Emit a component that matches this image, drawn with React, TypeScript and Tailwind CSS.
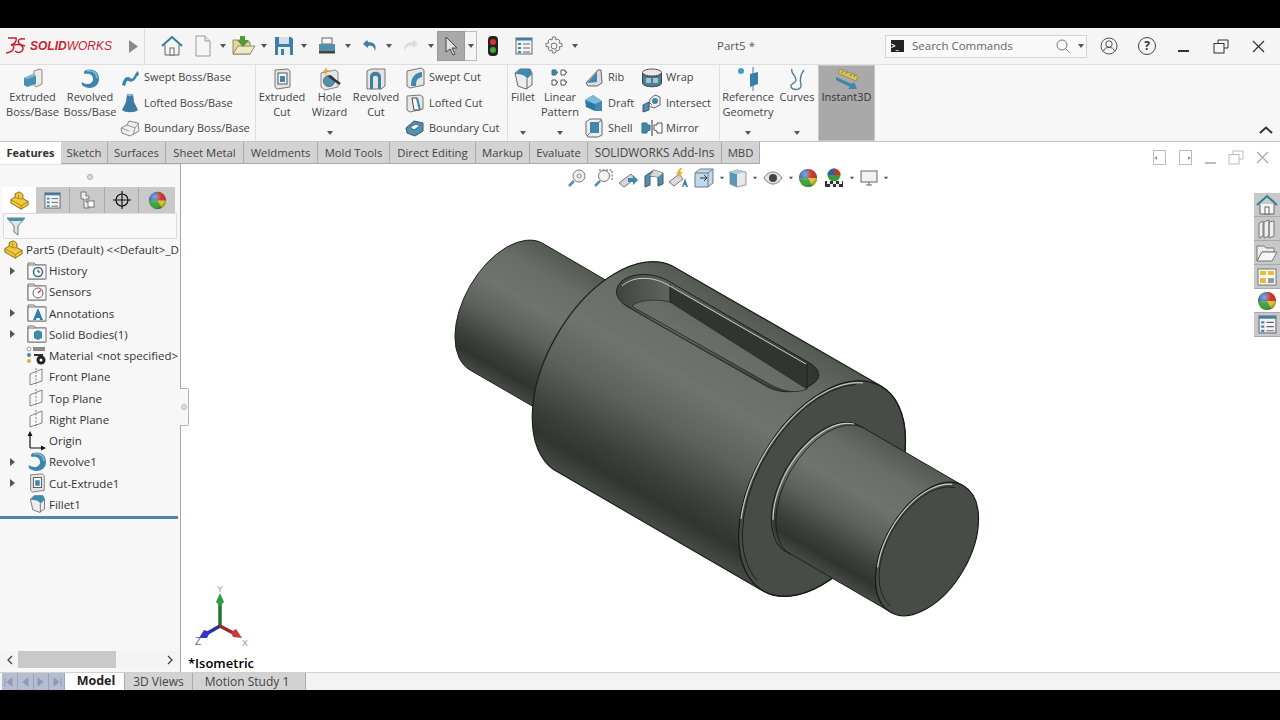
import type { ReactNode } from "react";

function I({ w = 24, h = 24, vb, children }: { w?: number; h?: number; vb?: string; children: ReactNode }) {
  return (
    <svg width={w} height={h} viewBox={vb ?? `0 0 ${w} ${h}`} className="block shrink-0">
      {children}
    </svg>
  );
}

function Caret({ className = "" }: { className?: string }) {
  return (
    <svg width="6" height="4" viewBox="0 0 6 4" className={`block shrink-0 ${className}`}>
      <path d="M0 0h6L3 4z" fill="#555" />
    </svg>
  );
}

/* feature icons */
const ExtrudedBoss = () => (
  <I>
    <path d="M13 4l6-2 2 1v14l-6 3-2-2z" fill="#ececec" stroke="#8a8a8a" />
    <path d="M3 11l9-4 3 2v8l-9 3-3-2z" fill="#4a8fb2" />
    <path d="M3 11l9-4 3 2-9 3z" fill="#7fb8d0" />
  </I>
);
const RevolvedBoss = () => (
  <I>
    <path d="M8 3c8-2 13 2 13 9 0 7-7 11-14 8-3-1-4-3-3-5 3 3 11 3 11-3 0-5-5-6-8-5-2-1-1-3 1-4z" fill="#3d87ad" />
    <path d="M9 4c6-1 10 2 10 7" stroke="#7cbbd6" strokeWidth="1.6" fill="none" />
  </I>
);
const Swept = () => (
  <I w={20} h={20}>
    <path d="M2 17c1-5 3-8 6-8 3 0 2 3 5 1 2-2 2-5 5-7l1 4c-3 1-3 5-6 6-4 2-4-1-6 0-1 1-1 3-2 5z" fill="#3a84ab" />
  </I>
);
const Lofted = () => (
  <I w={20} h={22}>
    <path d="M7 2h6l1 8 4 8c-3 3-13 3-16 0l4-8z" fill="#3c7ca3" />
    <ellipse cx="10" cy="3" rx="3" ry="1.2" fill="#86b7d0" />
  </I>
);
const BoundaryBoss = () => (
  <I w={20} h={18}>
    <path d="M1 9l6-3 2-4 9 2 1 8-9 5-8-3z" fill="#f0f0f0" stroke="#888" />
    <path d="M7 6l8 3 4-5M15 9l-2 7M1 9l8 3" stroke="#999" fill="none" />
  </I>
);
const ExtrudedCut = () => (
  <I w={20} h={22}>
    <path d="M3 2l13-1 2 2v16l-13 2-2-2z" fill="#e6e6e6" stroke="#777" />
    <rect x="6" y="5" width="9" height="11" fill="#f7f7f7" stroke="#555" />
    <path d="M8 8h5v6H8z" fill="#3f87ab" />
  </I>
);
const HoleWizard = () => (
  <I w={24} h={26}>
    <path d="M3 7l14-3 3 2v15l-13 3-4-3z" fill="#e6e6e6" stroke="#888" />
    <circle cx="11" cy="15" r="5.5" fill="#4d93b5" stroke="#666" />
    <path d="M11 10l11 8" stroke="#333" strokeWidth="2.5" />
    <path d="M8 1l1 3 3 1-3 1-1 3-1-3-3-1 3-1z" fill="#e3a326" />
  </I>
);
const RevolvedCut = () => (
  <I w={22} h={22}>
    <path d="M2 3l4-2h14v17l-4 3H2z" fill="#e4e4e4" stroke="#777" />
    <path d="M5 21V9c0-7 11-7 11 0v12h-3V10c0-3-5-3-5 0v11z" fill="#3f7f9f" />
  </I>
);
const SweptCut = () => (
  <I w={20} h={22}>
    <path d="M2 4l14-3 3 2v15l-14 3-3-2z" fill="#e6e6e6" stroke="#777" />
    <path d="M6 19c0-8 3-13 11-14v5c-5 1-6 4-6 9z" fill="#3f87ab" />
  </I>
);
const LoftedCut = () => (
  <I w={20} h={20}>
    <path d="M2 3l13-1 3 2v12l-13 3-3-2z" fill="#e6e6e6" stroke="#777" />
    <path d="M7 5h5l3 12H9z" fill="#f8f8f8" stroke="#444" />
    <path d="M12 5l3 12" stroke="#3f87ab" strokeWidth="2" />
  </I>
);
const BoundaryCut = () => (
  <I w={20} h={18}>
    <path d="M1 9l8-7 9 2v8l-8 5-8-3z" fill="#4d93b5" stroke="#456" />
    <path d="M5 8l6-3 4 2-6 4z" fill="#eef4f7" stroke="#345" strokeWidth=".7" />
  </I>
);
const Fillet = () => (
  <I w={22} h={24}>
    <path d="M3 6l5-4h10l2 4v12l-6 4-8-3z" fill="#ededed" stroke="#666" />
    <path d="M3 7c5 0 11 1 12 5l5-5-2-5H8z" fill="#3f8ab0" />
    <path d="M15 12v10" stroke="#666" />
  </I>
);
const LinearPattern = () => (
  <I w={20} h={22}>
    <path d="M2 2h4v2h2l-2 2v1H2z" fill="#3f87ab" stroke="#3f6f88" />
    <path d="M11 2h4v2h2l-2 2v1h-4z" fill="#fff" stroke="#555" />
    <path d="M2 12h4v2h2l-2 2v1H2z" fill="#fff" stroke="#555" />
    <path d="M11 12h4v2h2l-2 2v1h-4z" fill="#fff" stroke="#555" />
  </I>
);
const Rib = () => (
  <I w={20} h={20}>
    <path d="M2 15L14 2h3l1 13-5 3H4z" fill="#dcdcdc" stroke="#666" />
    <path d="M3 15L13 4v10z" fill="#3f87ab" />
  </I>
);
const Draft = () => (
  <I w={20} h={20}>
    <path d="M1 7l8-5 9 6v10h-7V11z" fill="#3f8ab0" />
    <path d="M1 7l8-5 9 6-7 3z" fill="#7cbcd8" />
    <path d="M1 7l10 4v7L2 14z" fill="#2d79a3" />
  </I>
);
const Shell = () => (
  <I w={20} h={20}>
    <path d="M2 4l4-3h11l1 3v13l-4 2H4l-2-3z" fill="#eee" stroke="#666" />
    <path d="M6 4h9v11H6z" fill="#3f87ab" />
    <path d="M6 15l-3 3M15 4l3-2" stroke="#666" />
  </I>
);
const Wrap = () => (
  <I w={22} h={20}>
    <ellipse cx="11" cy="4.5" rx="9.5" ry="3.5" fill="#e8e8e8" stroke="#555" />
    <path d="M1.5 5v10c0 5 19 5 19 0V5c0 5-19 5-19 0z" fill="#4d7d95" stroke="#444" />
    <path d="M5 10h5v5H5zM12 10h5v5h-5z" fill="#9cc6d9" />
  </I>
);
const Intersect = () => (
  <I w={20} h={20}>
    <path d="M1 12l6-3v8l-6 2z" fill="#4a8fb2" stroke="#456" />
    <path d="M8 6l5-4 5 2v8l-6 3-5-2z" fill="#f2f2f2" stroke="#666" />
    <circle cx="13" cy="8" r="3" fill="#3f87ab" />
    <path d="M7 9l3 3" stroke="#666" />
  </I>
);
const Mirror = () => (
  <I w={22} h={16}>
    <path d="M1 3h5v2h3v5l-3 1v2H1z" fill="#3f87ab" stroke="#3b6f8b" />
    <path d="M11 0v16" stroke="#333" />
    <path d="M21 3h-5v2h-3v5l3 1v2h5z" fill="#fff" stroke="#555" />
  </I>
);
const RefGeometry = () => (
  <I w={24} h={24}>
    <circle cx="5" cy="4" r="3" fill="#3f9fc6" />
    <path d="M14 7l8-2v12l-8 3z" fill="#2f80aa" />
    <path d="M17 0v24" stroke="#4a7f9b" strokeWidth="1" />
  </I>
);
const Curves = () => (
  <I w={22} h={24}>
    <path d="M6 2c-2 4 4 6 4 11 0 4-6 3-5 7 2 4 11 3 10-2-1-4-1-10 3-15" fill="none" stroke="#4f8099" strokeWidth="1.4" />
  </I>
);
const Instant3D = () => (
  <I w={24} h={22}>
    <path d="M5 1l18 7-2 5L3 5z" fill="#d9c554" stroke="#857c33" strokeWidth=".6" />
    <path d="M8 3l-1 2M12 4l-1 2M16 6l-1 2M20 7l-1 2" stroke="#555" strokeWidth=".8" />
    <path d="M1 9l16 7 2-2 3 7-9 0 2-2L1 12z" fill="#3f87ab" />
  </I>
);

/* top bar icons */
const Home = () => (
  <I w={22} h={22}>
    <path d="M1 11L11 2l10 9" fill="none" stroke="#2f7f95" strokeWidth="2" />
    <path d="M4 10v10h14V10" fill="#f5f5f5" stroke="#666" />
    <rect x="9" y="13" width="4" height="7" fill="#fff" stroke="#666" />
  </I>
);
const FileIcon = () => (
  <I w={18} h={22}>
    <path d="M2 1h9l5 5v15H2z" fill="#f6f6f6" stroke="#999" />
    <path d="M11 1v5h5" fill="#e5e5e5" stroke="#999" />
  </I>
);
const OpenIcon = () => (
  <I w={24} h={22}>
    <path d="M1 5h7l2 2h8v12H1z" fill="#e6d49a" stroke="#8f8a68" />
    <path d="M1 19l5-8h17l-5 8z" fill="#f2e8c4" stroke="#8f8a68" />
    <path d="M8 1h5v4h4l-6 7-6-7h3z" fill="#4e9b2f" />
  </I>
);
const Save = () => (
  <I w={20} h={20}>
    <path d="M1 1h16l2 2v16H1z" fill="#3f7fa3" />
    <rect x="5" y="1" width="10" height="7" fill="#cfe0ea" />
    <rect x="4" y="11" width="12" height="8" fill="#e9eef1" />
    <rect x="7" y="13" width="3" height="6" fill="#3f7fa3" />
  </I>
);
const Print = () => (
  <I w={18} h={18}>
    <rect x="4" y="1" width="10" height="6" fill="#f8f8f8" stroke="#666" />
    <path d="M1 7h16v7H1z" fill="#4f8fb0" />
    <rect x="1" y="14" width="16" height="2.5" fill="#444" />
  </I>
);
const Undo = ({ dim = false }: { dim?: boolean }) => (
  <I w={16} h={14}>
    <path
      d={dim ? "M11 1l4 4-5 4V7c-4-1-7 0-8 5-2-6 2-9 8-9z" : "M5 1L1 5l5 4V7c4-1 6 0 7 5 2-6-1-9-7-9z"}
      fill={dim ? "#dcdcdc" : "#3f7fa3"}
    />
  </I>
);
const Cursor = () => (
  <I w={14} h={20}>
    <path d="M2 1v15l4-3 3 6 2-1-3-6h5z" fill="#e0e0e0" stroke="#444" />
  </I>
);
const Traffic = () => (
  <I w={10} h={20}>
    <rect x="0" y="0" width="10" height="20" rx="4" fill="#222" />
    <circle cx="5" cy="6" r="3" fill="#d8322b" />
    <circle cx="5" cy="14" r="3" fill="#46a53a" />
  </I>
);
const ListIcon = ({ s = 18 }: { s?: number }) => (
  <I w={s} h={s} vb="0 0 18 18">
    <rect x="1" y="1" width="16" height="16" fill="#f4f4f4" stroke="#667" />
    <rect x="1" y="1" width="16" height="2.5" fill="#3f7fa3" />
    <path d="M3 6h3v2H3zM3 10h3v2H3zM3 14h3v2H3z" fill="#3f87ab" />
    <path d="M8 7h7M8 11h7M8 15h7" stroke="#666" />
  </I>
);
const Gear = () => (
  <I w={20} h={20}>
    <circle cx="10" cy="10" r="3" fill="none" stroke="#777" />
    <path
      d="M8.5 1h3l.5 3 2-1 2 2-1 2 3 .5v3l-3 .5 1 2-2 2-2-1-.5 3h-3l-.5-3-2 1-2-2 1-2-3-.5v-3l3-.5-1-2 2-2 2 1z"
      fill="none"
      stroke="#777"
    />
  </I>
);
const UserIcon = () => (
  <I w={18} h={18}>
    <circle cx="9" cy="9" r="8" fill="none" stroke="#555" />
    <circle cx="9" cy="7" r="3.2" fill="none" stroke="#555" />
    <path d="M3.5 14c1-3 3-3.500 5.500-3.500s4.500.5 5.500 3.500" fill="none" stroke="#555" />
  </I>
);
const Restore = ({ c = "#333" }: { c?: string }) => (
  <I w={16} h={15}>
    <path d="M5 4V1h10v8h-4" fill="none" stroke={c} />
    <rect x="1" y="4.500" width="10" height="9.500" fill="none" stroke={c} />
  </I>
);
const CloseX = ({ c = "#333", s = 13 }: { c?: string; s?: number }) => (
  <I w={s} h={s}>
    <path d={`M1 1L${s - 1} ${s - 1}M${s - 1} 1L1 ${s - 1}`} stroke={c} strokeWidth="1.2" />
  </I>
);

/* task pane + shared */
const Sphere = ({ s = 22 }: { s?: number }) => (
  <I w={s} h={s} vb="0 0 22 22">
    <defs>
      <radialGradient id="gloss" cx="0.35" cy="0.3" r="0.7">
        <stop offset="0" stopColor="#fff" stopOpacity=".45" />
        <stop offset="0.6" stopColor="#fff" stopOpacity="0" />
        <stop offset="1" stopColor="#000" stopOpacity=".25" />
      </radialGradient>
    </defs>
    <circle cx="11" cy="11" r="10" fill="#3f9f3a" />
    <path d="M11 11H1A10 10 0 0 1 11 1z" fill="#2f5fb5" />
    <path d="M11 11V1a10 10 0 0 1 10 10z" fill="#c6302a" />
    <path d="M11 11h10a10 10 0 0 1-5 8.700z" fill="#e0c52e" />
    <circle cx="11" cy="11" r="10" fill="url(#gloss)" />
  </I>
);
const PartIcon = ({ s = 22 }: { s?: number }) => (
  <I w={s} h={s} vb="0 0 22 22">
    <path d="M1 10l5-3V3l5-2 4 3v5l6 3v4l-8 5-12-7z" fill="#f3c93c" stroke="#7a5e10" />
    <path d="M1 10l12 7v4M13 17l8-5M6 7l4 2 5 0M10 9V4" fill="none" stroke="#a67f16" />
  </I>
);

/* tree icons */
const Folder = ({ children }: { children: ReactNode }) => (
  <I w={20} h={20}>
    <path d="M1 18V2h6l2 2h9v14z" fill="#f4f4f4" stroke="#777" />
    <rect x="1" y="4" width="18" height="14" fill="#f8f8f8" stroke="#777" />
    {children}
  </I>
);
const PlaneIcon = () => (
  <I w={20} h={20}>
    <path d="M3 7l12-5v12L3 18z" fill="none" stroke="#777" strokeWidth=".9" />
    <path d="M9 1v18" stroke="#777" strokeWidth=".9" strokeDasharray="2 1.500" />
  </I>
);
const Origin = () => (
  <I w={20} h={20}>
    <path d="M3 17V4M3 17h14" stroke="#111" strokeWidth="1.200" />
    <path d="M3 0l2.500 5h-5zM19 17l-5-2.500v5z" fill="#111" />
  </I>
);
const Material = () => (
  <I w={22} h={20}>
    <circle cx="3" cy="3" r="2" fill="#fff" stroke="#999" />
    <circle cx="3" cy="9" r="2" fill="#3f87ab" />
    <circle cx="3" cy="15" r="2" fill="#d8b32a" />
    <path d="M7 2h12M7 4h12" stroke="#222" strokeWidth="1.200" />
    <path d="M8 8h9v2H8z" fill="#333" />
    <circle cx="15" cy="14" r="4.500" fill="#222" />
    <circle cx="15" cy="14" r="1.500" fill="#fff" />
  </I>
);

const PLANES = ["Front Plane", "Top Plane", "Right Plane"];

function TreeRow({ arrow, icon, label }: { arrow?: boolean; icon: ReactNode; label: string }) {
  return (
    <div className="flex h-[21.25px] items-center whitespace-nowrap">
      <div className="flex w-[24px] justify-center">
        {arrow && (
          <svg width="5" height="8" viewBox="0 0 5 8" className="block">
            <path d="M0 0l5 4-5 4z" fill="#555" />
          </svg>
        )}
      </div>
      <div className="flex w-[25px] shrink-0 items-center justify-center">{icon}</div>
      <span className="text-[#333]">{label}</span>
    </div>
  );
}

function BigBtn({ w, lines, icon, caret }: { w: string; lines: string[]; icon: ReactNode; caret?: boolean }) {
  return (
    <div className={`flex h-full shrink-0 flex-col items-center pt-[4px] ${w}`}>
      <div className="flex h-[20px] items-center justify-center">{icon}</div>
      <div className="text-center leading-[15px]">
        {lines.map((l) => (
          <div key={l} className="whitespace-nowrap">
            {l}
          </div>
        ))}
      </div>
      {caret && <Caret className="mt-auto mb-[6px]" />}
    </div>
  );
}

function ListCol({ w, items }: { w: string; items: { label: string; icon: ReactNode }[] }) {
  return (
    <div className={`flex shrink-0 flex-col ${w}`}>
      {items.map((it) => (
        <div key={it.label} className="flex h-[25.300px] items-center whitespace-nowrap">
          <div className="flex w-[24px] shrink-0 justify-center">{it.icon}</div>
          <span className="ml-[2px]">{it.label}</span>
        </div>
      ))}
    </div>
  );
}

const TABS = [
  { label: "Sketch", w: "w-[47px]" },
  { label: "Surfaces", w: "w-[58px]" },
  { label: "Sheet Metal", w: "w-[78px]" },
  { label: "Weldments", w: "w-[74px]" },
  { label: "Mold Tools", w: "w-[72px]" },
  { label: "Direct Editing", w: "w-[86px]" },
  { label: "Markup", w: "w-[54px]" },
  { label: "Evaluate", w: "w-[58px]" },
  { label: "SOLIDWORKS Add-Ins", w: "w-[134px] text-[11.800px]" },
  { label: "MBD", w: "w-[38px]" },
];

const STOPS: [number, string][] = [
  [0, "#535a52"],
  [0.18, "#686e67"],
  [0.4, "#6f756e"],
  [0.6, "#5c625b"],
  [0.8, "#3b403a"],
  [0.9, "#30352f"],
  [1, "#464b45"],
];

function Cyl({ id, v }: { id: string; v: number[] }) {
  return (
    <linearGradient id={id} gradientUnits="userSpaceOnUse" x1={v[0]} y1={v[1]} x2={v[2]} y2={v[3]}>
      {STOPS.map(([o, c]) => (
        <stop key={o} offset={o} stopColor={c} />
      ))}
    </linearGradient>
  );
}

function Shaft() {
  return (
    <svg width="1099" height="508" viewBox="181 164 1099 508" className="absolute top-0 left-0 block">
      <defs>
        <Cyl id="cl" v={[543, 243.5, 470, 370]} />
        <Cyl id="cb" v={[671.5, 265.5, 553.5, 469.5]} />
        <Cyl id="cr" v={[858.5, 425, 785.5, 551]} />
        <linearGradient id="sl" x1="0" y1="0" x2="1" y2="0">
          <stop offset="0" stopColor="#3e443e" />
          <stop offset="0.25" stopColor="#5f655e" />
          <stop offset="1" stopColor="#2f352f" />
        </linearGradient>
      </defs>
      {/* left stub */}
      <path d="M543 243.500A73 42 -60 0 0 470 370L560 422L633 296Z" fill="url(#cl)" stroke="#1c1f1c" strokeWidth="1" />
      {/* main body */}
      <path d="M671.500 265.500A118 68 -60 0 0 553.500 469.500L763 591A118 68 -60 0 0 881 386Z" fill="url(#cb)" stroke="#1c1f1c" strokeWidth="1.200" />
      {/* keyway */}
      <path
        d="M670 282L806 361C818 367 822 375 816 381C806 391 786 396 768 387L628 307C616 300 613 290 621 282C630 273 652 271 670 282Z"
        fill="url(#sl)"
        stroke="#1c1f1c"
      />
      <path d="M670 286L807 366V389L670 302Z" fill="#30362f" />
      <path d="M670 284V302M807 364V389" stroke="#1c1f1c" />
      <path d="M670 302L807 389C798 393 786 393 771 385L633 307C631 303 650 297 670 302Z" fill="url(#cb)" stroke="#262a26" strokeWidth=".8" />
      <path d="M622 286C631 277 651 275 668 285L806 364" fill="none" stroke="#c9cdc8" strokeWidth="1" />
      {/* flange face */}
      <ellipse cx="822" cy="488.500" rx="118" ry="68" transform="rotate(-60 822 488.500)" fill="#474d46" stroke="#161916" strokeWidth="1.200" />
      <path d="M863 382.800A116 67 -60 0 0 741 518.800" fill="none" stroke="#c2c6c1" strokeWidth="1.300" />
      <path d="M856 384.400A114 65.800 -60 0 0 757 580" fill="none" stroke="#161916" strokeWidth=".9" />
      {/* right stub */}
      <path d="M858.500 425A73 42 -60 0 0 785.500 551L890.500 612L963.500 486Z" fill="url(#cr)" />
      <path d="M858.500 425L963.500 486M785.500 551L890.500 612" stroke="#1c1f1c" />
      <path d="M858.500 425.300A73 42 -60 0 0 785.500 551.700" fill="none" stroke="#161916" strokeWidth="1" />
      <path d="M851.600 422.600A73 42 -60 0 0 770.500 518.300" fill="none" stroke="#c9cdc8" strokeWidth="1.200" transform="translate(2.500 1.500)" />
      <path d="M858.500 425.300A73 42 -60 0 0 785.500 551.700" fill="none" stroke="#161916" strokeWidth=".8" transform="translate(4.500 2.600)" />
      {/* end face */}
      <ellipse cx="927" cy="549" rx="73" ry="42" transform="rotate(-60 927 549)" fill="#474d46" stroke="#161916" strokeWidth="1.200" />
      <path d="M952.100 484.300A71 41 -60 0 0 877.500 567.400" fill="none" stroke="#c9cdc8" strokeWidth="1.200" />
      <path d="M954.600 487.600A68 39.300 -60 0 0 890.200 605.900" fill="none" stroke="#161916" strokeWidth=".8" />
    </svg>
  );
}

function Triad() {
  return (
    <svg width="60" height="62" viewBox="0 0 60 62" className="absolute top-[421px] left-[11px] block">
      <path d="M28 42L28 18" stroke="#1e7a2f" strokeWidth="3.500" />
      <path d="M28 8l4 9-4 4-4-4z" fill="#2f9c40" />
      <path d="M28 41L14 49" stroke="#2b2f9c" strokeWidth="3.500" />
      <path d="M7 53l5-8 6 2-3 6z" fill="#3438c8" />
      <path d="M28 41L43 49" stroke="#9a2a2a" strokeWidth="3.500" />
      <path d="M50 53l-9-1-2-5 5-3z" fill="#c73a3a" />
      <text x="25" y="7" fontSize="9" fill="#88a88c" fontFamily="Liberation Sans, sans-serif">Y</text>
      <text x="3" y="60" fontSize="10" fill="#5a5f9a" fontFamily="Liberation Sans, sans-serif">Z</text>
      <text x="50" y="61" fontSize="9" fill="#b28a8a" fontFamily="Liberation Sans, sans-serif">X</text>
    </svg>
  );
}

export default function App() {
  return (
    <div className="flex h-[720px] w-[1280px] flex-col overflow-hidden bg-black font-['Open_Sans',sans-serif] text-[11.5px] text-[#444]">
      <div className="h-[28px] shrink-0 bg-black" />

      {/* title bar */}
      <div className="flex h-[36px] shrink-0 items-center bg-[#f5f5f5]">
        <div className="flex h-full w-[145px] shrink-0 items-center border-r border-[#dcdcdc] pl-[5px]">
          <svg width="22" height="20" viewBox="0 0 22 20" className="block shrink-0">
            <path d="M3 2h8c1 3-1 6-5 7 3 0 4 3 1 6-2 1-4 2-6 2M9 9c4-1 8 0 11 1M20 3c-5-1-8 1-6 4s6 4 3 8c-2 2-5 2-7 0" fill="none" stroke="#c8202f" strokeWidth="1.500" />
          </svg>
          <span className="ml-[3px] font-['Liberation_Sans',sans-serif] text-[12px] text-[#c8202f] italic">
            <b>SOLID</b>WORKS
          </span>
          <svg width="9" height="13" viewBox="0 0 9 13" className="ml-[17px] block shrink-0">
            <path d="M0 0l9 6.500L0 13z" fill="#8a8a8a" />
          </svg>
        </div>
        <div className="ml-[16px]"><Home /></div>
        <div className="ml-[11px]"><FileIcon /></div>
        <Caret className="ml-[8px]" />
        <div className="ml-[6px]"><OpenIcon /></div>
        <Caret className="ml-[5px]" />
        <div className="ml-[7px]"><Save /></div>
        <Caret className="ml-[7px]" />
        <div className="ml-[11px]"><Print /></div>
        <Caret className="ml-[9px]" />
        <div className="ml-[11px]"><Undo /></div>
        <Caret className="ml-[8px]" />
        <div className="ml-[11px]"><Undo dim /></div>
        <Caret className="ml-[9px]" />
        <div className="ml-[3px] flex h-[30px] w-[28px] items-center justify-center border border-[#999] bg-[#a9a9a9]"><Cursor /></div>
        <div className="flex h-[30px] w-[12px] items-center justify-center border-y border-r border-[#bbb]"><Caret /></div>
        <div className="ml-[11px]"><Traffic /></div>
        <div className="ml-[17px]"><ListIcon /></div>
        <div className="ml-[11px]"><Gear /></div>
        <Caret className="ml-[8px]" />
        <span className="ml-[139px] whitespace-nowrap text-[#555]">Part5 *</span>
        <div className="ml-[130px] flex h-[23px] w-[202px] shrink-0 items-center border border-[#d4d4d4] bg-[#f9f9f9] pl-[5px]">
          <div className="h-[12px] w-[13px] bg-[#222] text-[8px] leading-[11px] font-bold text-white">&gt;_</div>
          <span className="ml-[8px] text-[#666]">Search Commands</span>
          <svg width="16" height="16" viewBox="0 0 16 16" className="ml-auto block">
            <circle cx="7" cy="7" r="5" fill="none" stroke="#777" />
            <path d="M10.500 10.500l4 4" stroke="#777" />
          </svg>
          <Caret className="mr-[2px] ml-[7px]" />
        </div>
        <div className="ml-[13px]"><UserIcon /></div>
        <div className="ml-[20px] flex h-[18px] w-[18px] items-center justify-center rounded-full border-[1.5px] border-[#444] text-[12px] font-bold text-[#333]">?</div>
        <div className="mt-[10px] ml-[22px] h-[1.500px] w-[11px] bg-[#333]" />
        <div className="ml-[24px]"><Restore /></div>
        <div className="ml-[23px]"><CloseX /></div>
      </div>

      {/* ribbon */}
      <div className="flex h-[78px] shrink-0 border-t border-b border-t-[#dfdfdf] border-b-[#c4c4c4] bg-[#f7f7f7] text-[11px]">
        <div className="flex w-[256px] shrink-0 border-r border-[#dedede] pl-[4px]">
          <BigBtn w="w-[57px]" lines={["Extruded", "Boss/Base"]} icon={<ExtrudedBoss />} />
          <BigBtn w="w-[57px] pl-[1px]" lines={["Revolved", "Boss/Base"]} icon={<RevolvedBoss />} />
          <ListCol
            w="w-[134px]"
            items={[
              { label: "Swept Boss/Base", icon: <Swept /> },
              { label: "Lofted Boss/Base", icon: <Lofted /> },
              { label: "Boundary Boss/Base", icon: <BoundaryBoss /> },
            ]}
          />
        </div>
        <div className="flex w-[252px] shrink-0 border-r border-[#dedede]">
          <BigBtn w="w-[50px] pl-[2px]" lines={["Extruded", "Cut"]} icon={<ExtrudedCut />} />
          <BigBtn w="w-[46px] pl-[1px]" lines={["Hole", "Wizard"]} icon={<HoleWizard />} caret />
          <BigBtn w="w-[48px]" lines={["Revolved", "Cut"]} icon={<RevolvedCut />} />
          <ListCol
            w="w-[104px] ml-[3px]"
            items={[
              { label: "Swept Cut", icon: <SweptCut /> },
              { label: "Lofted Cut", icon: <LoftedCut /> },
              { label: "Boundary Cut", icon: <BoundaryCut /> },
            ]}
          />
        </div>
        <div className="flex w-[212px] shrink-0 border-r border-[#dedede]">
          <BigBtn w="w-[30px]" lines={["Fillet"]} icon={<Fillet />} caret />
          <BigBtn w="w-[44px]" lines={["Linear", "Pattern"]} icon={<LinearPattern />} caret />
          <ListCol
            w="w-[58px]"
            items={[
              { label: "Rib", icon: <Rib /> },
              { label: "Draft", icon: <Draft /> },
              { label: "Shell", icon: <Shell /> },
            ]}
          />
          <ListCol
            w="w-[78px]"
            items={[
              { label: "Wrap", icon: <Wrap /> },
              { label: "Intersect", icon: <Intersect /> },
              { label: "Mirror", icon: <Mirror /> },
            ]}
          />
        </div>
        <BigBtn w="w-[56px]" lines={["Reference", "Geometry"]} icon={<RefGeometry />} caret />
        <BigBtn w="w-[42px]" lines={["Curves"]} icon={<Curves />} caret />
        <div className="flex h-full w-[57px] shrink-0 flex-col items-center border border-[#c9c9c9] bg-[#a9a9a9] pt-[3px] text-[#333]">
          <div className="flex h-[20px] items-center"><Instant3D /></div>
          <div className="leading-[15px]">Instant3D</div>
        </div>
        <div className="flex flex-1 items-end justify-end pr-[7px] pb-[7px]">
          <svg width="14" height="8" viewBox="0 0 14 8" className="block">
            <path d="M1 7l6-5.500L13 7" fill="none" stroke="#333" strokeWidth="2" />
          </svg>
        </div>
      </div>

      {/* command manager tabs */}
      <div className="flex h-[22px] shrink-0 items-stretch bg-white text-[11.300px]">
        <div className="flex w-[61px] items-center justify-center pt-[1px] text-[11px] font-bold whitespace-nowrap text-[#333]">Features</div>
        {TABS.map((t) => (
          <div key={t.label} className={`flex items-center justify-center border-r border-b border-[#a9a9a9] bg-[#d3d3d3] pt-[1px] whitespace-nowrap text-[#444] ${t.w}`}>
            {t.label}
          </div>
        ))}
      </div>

      {/* main */}
      <div className="flex h-[508px] shrink-0 bg-white">
        {/* feature manager */}
        <div className="relative z-10 flex w-[181px] shrink-0 flex-col border-r border-[#a5a5a5] bg-[#f7f7f7]">
          <div className="flex h-[23px] shrink-0 items-center justify-center border-t border-[#e5e5e5] pt-[1px]">
            <div className="h-[6px] w-[6px] rounded-full border border-[#aaa] bg-[#ddd]" />
          </div>
          <div className="flex h-[26px] shrink-0 pl-[2px]">
            <div className="flex w-[34px] items-center justify-center bg-white"><PartIcon s={19} /></div>
            <div className="flex w-[34px] items-center justify-center border-r border-[#aaa] bg-[#c9c9c9]"><ListIcon s={17} /></div>
            <div className="flex w-[35px] items-center justify-center border-r border-[#aaa] bg-[#c9c9c9]">
              <I w={16} h={18}>
                <path d="M2 1h5v4h3v3H7v3h3v6H5V8H2z" fill="#ececec" stroke="#777" />
                <rect x="9" y="10" width="6" height="6" fill="#fff" stroke="#777" />
              </I>
            </div>
            <div className="flex w-[34px] items-center justify-center border-r border-[#aaa] bg-[#c9c9c9]">
              <I w={18} h={18}>
                <circle cx="9" cy="9" r="6" fill="none" stroke="#111" strokeWidth="1.200" />
                <path d="M9 0v18M0 9h18" stroke="#111" strokeWidth="1.200" />
              </I>
            </div>
            <div className="flex w-[36px] items-center justify-center bg-[#c9c9c9]"><Sphere s={19} /></div>
          </div>
          <div className="mx-[3px] flex h-[26px] shrink-0 items-center border border-[#dcdcdc] bg-[#f8f8f8] pl-[2px]">
            <svg width="20" height="20" viewBox="0 0 20 20" className="block">
              <path d="M1 2h18l-7 8v9l-4-3v-6z" fill="#d8e6ec" stroke="#6d7f88" />
              <path d="M1 2h18l-3 3H4z" fill="#4f8fb0" />
            </svg>
          </div>
          <div className="flex-1 overflow-hidden">
            <div className="flex h-[21px] items-center whitespace-nowrap">
              <div className="ml-[4px] w-[22px] shrink-0"><PartIcon s={19} /></div>
              <span className="text-[#333]">Part5 (Default) &lt;&lt;Default&gt;_D</span>
            </div>
            <TreeRow arrow label="History" icon={<Folder><circle cx="11" cy="11" r="4.500" fill="#fff" stroke="#2f6f93" strokeWidth="1.500" /><path d="M11 8.500V11h2" stroke="#333" fill="none" /></Folder>} />
            <TreeRow label="Sensors" icon={<Folder><circle cx="11" cy="11" r="5" fill="#fff" stroke="#666" /><path d="M11 11l3-3" stroke="#c33" strokeWidth="1.200" /></Folder>} />
            <TreeRow arrow label="Annotations" icon={<Folder><path d="M11 5l5 12h-3l-.5-2h-3L9 17H6z" fill="#2f7fa8" /></Folder>} />
            <TreeRow arrow label="Solid Bodies(1)" icon={<Folder><path d="M7 8l4-2 4 2v6l-4 2-4-2z" fill="#3f87ab" /></Folder>} />
            <TreeRow label="Material <not specified>" icon={<Material />} />
            {PLANES.map((p) => (
              <TreeRow key={p} label={p} icon={<PlaneIcon />} />
            ))}
            <TreeRow label="Origin" icon={<Origin />} />
            <TreeRow arrow label="Revolve1" icon={<RevolvedBoss />} />
            <TreeRow arrow label="Cut-Extrude1" icon={<I w={20} h={20} vb="0 0 20 22"><path d="M3 2l13-1 2 2v16l-13 2-2-2z" fill="#e6e6e6" stroke="#777" /><rect x="6" y="5" width="9" height="11" fill="#f7f7f7" stroke="#555" /><path d="M8 8h5v6H8z" fill="#3f87ab" /></I>} />
            <TreeRow label="Fillet1" icon={<I w={20} h={20} vb="0 0 22 24"><path d="M3 6l5-4h10l2 4v12l-6 4-8-3z" fill="#ededed" stroke="#666" /><path d="M3 7c5 0 11 1 12 5l5-5-2-5H8z" fill="#3f8ab0" /><path d="M15 12v10" stroke="#666" /></I>} />
            <div className="mt-[1px] h-[3px] w-[178px] bg-[#4f86ad]" />
          </div>
          <div className="mb-[4px] flex h-[17px] shrink-0 items-center bg-[#f4f4f4]">
            <svg width="18" height="10" viewBox="0 0 18 10" className="block shrink-0">
              <path d="M12 1L8 5l4 4" fill="none" stroke="#444" strokeWidth="1.300" />
            </svg>
            <div className="h-full w-[98px] bg-[#c9c9c9]" />
            <svg width="10" height="10" viewBox="0 0 10 10" className="ml-auto mr-[5px] block">
              <path d="M3 1l4 4-4 4" fill="none" stroke="#444" strokeWidth="1.300" />
            </svg>
          </div>
          {/* splitter handle */}
          <div className="absolute top-[224px] left-[180px] flex h-[38px] w-[9px] items-center justify-center rounded-r-[2px] border-y border-r border-[#b5b5b5] bg-[#f8f8f8]">
            <div className="h-[6px] w-[6px] rounded-full border border-[#bbb] bg-[#ddd]" />
          </div>
        </div>

        {/* graphics area */}
        <div className="relative flex-1 bg-white">
          <Shaft />
          {/* heads-up toolbar */}
          <div className="absolute top-[4px] left-[386px] flex h-[20px] items-center">
            <I w={20} h={20}><circle cx="12" cy="8" r="6" fill="#f0f0f0" stroke="#777" /><circle cx="12" cy="8" r="2" fill="none" stroke="#888" /><path d="M7 13l-5 5" stroke="#4f8fb0" strokeWidth="2.500" /></I>
            <div className="ml-[6px]"><I w={20} h={20}><circle cx="11" cy="8" r="5.500" fill="#f4f4f4" stroke="#777" /><path d="M6 2h13v11" fill="none" stroke="#555" strokeDasharray="2 1.500" /><path d="M7 13l-5 5" stroke="#4f8fb0" strokeWidth="2.500" /></I></div>
            <div className="ml-[5px]"><I w={20} h={20}><path d="M1 15l12-9 4 5-11 8z" fill="#d7d7d7" stroke="#777" /><path d="M10 10h5V7l5 5-5 5v-3h-5z" fill="#3f87ab" /></I></div>
            <div className="ml-[6px]"><I w={20} h={20}><path d="M1 8l9-6 9 3v11l-5 2V9L6 8v9l-5 2z" fill="#4f8fb0" stroke="#456" /><path d="M6 8l8 1 5-4-9-3z" fill="#d8d8d8" /></I></div>
            <div className="ml-[4px]"><I w={22} h={20}><path d="M1 14l10-8 4 5-9 7z" fill="#dcdcdc" stroke="#777" /><path d="M12 0l-4 6h3l-2 5 6-7h-3l2-4z" fill="#e6b429" /><path d="M14 19l3-9 3 9h-2l-.5-2h-1.500l-.5 2z" fill="#3f7fa3" /></I></div>
            <div className="ml-[4px]"><I w={22} h={20}><path d="M1 5l5-4h13v14l-5 4H1z" fill="#bcdcea" stroke="#778" /><path d="M1 5h13v14M14 5l5-4" fill="none" stroke="#778" /><path d="M6 10h7M10 7l3 3-3 3" stroke="#333" fill="none" /></I></div>
            <Caret className="ml-[3px] scale-75" />
            <div className="ml-[3px]"><I w={20} h={20}><path d="M2 4l7-2 9 2v13l-9 2-7-3z" fill="#e9e9e9" stroke="#999" /><path d="M2 4l7 2v13l-7-3z" fill="#5b97b7" /><path d="M2 4l7-2 9 2-9 2z" fill="#a5d0e2" /></I></div>
            <Caret className="ml-[4px] scale-75" />
            <div className="ml-[5px]"><I w={20} h={16}><path d="M1 8c5-8 13-8 18 0-5 8-13 8-18 0z" fill="#e4e4e4" stroke="#777" /><circle cx="10" cy="8" r="4" fill="#444" /></I></div>
            <Caret className="ml-[5px] scale-75" />
            <div className="ml-[4px]"><Sphere s={20} /></div>
            <div className="ml-[6px] flex items-start">
              <I w={20} h={20}><circle cx="10" cy="7" r="6.500" fill="#3a9a3a" /><path d="M10 7H3.500A7 7 0 0 1 10 .5z" fill="#2f5fb5" /><path d="M10 7V.5A7 7 0 0 1 16.500 7z" fill="#c6302a" /><path d="M1 13h18v6H1z" fill="#333" /><path d="M3 13h3v3H3zM9 13h3v3H9zM15 13h3v3h-3zM6 16h3v3H6zM12 16h3v3h-3z" fill="#eee" /></I>
            </div>
            <Caret className="ml-[5px] scale-75" />
            <div className="ml-[5px]"><I w={18} h={16}><rect x="1" y="1" width="16" height="11" fill="#f2f2f2" stroke="#666" /><path d="M6 15h6M9 12v3" stroke="#666" /></I></div>
            <Caret className="ml-[5px] scale-75" />
          </div>
          {/* task pane */}
          <div className="absolute top-[29px] left-[1073px] flex w-[26px] flex-col bg-[#c8c8c8]">
            {[
              <Home key="h" />,
              <I key="b" w={20} h={20}><path d="M2 4l4-2v15l-4 2zM7 3l5-2v16l-5 2zM12 3l5-1v15l-5 2z" fill="#eee" stroke="#777" /></I>,
              <I key="f" w={22} h={20}><path d="M1 3h7l2 2h8v4H6l-5 9z" fill="#eee" stroke="#777" /><path d="M1 18l5-9h15l-5 9z" fill="#f6f6f6" stroke="#777" /></I>,
              <I key="p" w={20} h={20}><rect x="1" y="2" width="18" height="16" fill="#fafafa" stroke="#777" /><path d="M3 4h6v4H3zM11 4h6v4h-6zM3 11h6v5H3z" fill="#e8bb3a" /><path d="M11 11h6v5h-6z" fill="#999" /></I>,
              <Sphere key="s" s={20} />,
              <ListIcon key="l" s={19} />,
            ].map((ic, i) => (
              <div key={i} className={`flex h-[24px] items-center justify-center border-b border-[#aaa] ${i === 4 ? "bg-white" : ""}`}>{ic}</div>
            ))}
          </div>
          <Triad />
          <div className="absolute top-[491px] left-[7px] text-[13px] leading-[16px] font-semibold whitespace-nowrap text-black">*Isometric</div>
          {/* window controls of the document */}
          <div className="absolute top-[-14px] right-[11px] flex items-center">
            <I w={13} h={15}><rect x=".5" y=".5" width="12" height="14" fill="#fff" stroke="#bbb" /><path d="M4 6l-3 2 3 2z" fill="#999" /></I>
            <div className="ml-[13px]"><I w={13} h={15}><rect x=".5" y=".5" width="12" height="14" fill="#fff" stroke="#bbb" /><path d="M9 6l3 2-3 2z" fill="#999" /></I></div>
            <div className="mt-[11px] ml-[13px] h-[1.500px] w-[11px] bg-[#bbb]" />
            <div className="ml-[12px]"><Restore c="#bbb" /></div>
            <div className="ml-[12px]"><CloseX c="#aaa" /></div>
          </div>
        </div>
      </div>

      {/* bottom tabs */}
      <div className="flex h-[18px] shrink-0 items-stretch border-t border-[#d0d0d0] bg-[#f3f3f3]">
        <div className="ml-[2px] flex w-[63px] shrink-0">
          {["M3 3v8M10 3L5 7l5 4z", "M10 3L5 7l5 4z", "M4 3l5 4-5 4z", "M11 3v8M4 3l5 4-5 4z"].map((d) => (
            <div key={d} className="flex flex-1 items-center justify-center border-r border-[#9aa3bb] bg-[#b6bdd0]">
              <svg width="14" height="14" viewBox="0 0 14 14" className="block">
                <path d={d} fill="#9099b3" stroke="#9099b3" />
              </svg>
            </div>
          ))}
        </div>
        <div className="flex w-[59px] shrink-0 items-center justify-center bg-white pl-[3px] text-[12.5px] font-bold text-[#222]">Model</div>
        <div className="flex w-[69px] shrink-0 items-center justify-center border-x border-[#aaa] bg-[#d3d3d3] text-[12px] whitespace-nowrap">3D Views</div>
        <div className="flex w-[113px] shrink-0 items-center justify-center border-r border-[#aaa] bg-[#d3d3d3] pr-[4px] text-[12px] whitespace-nowrap">Motion Study 1</div>
      </div>

      <div className="flex-1 bg-black" />
    </div>
  );
}
